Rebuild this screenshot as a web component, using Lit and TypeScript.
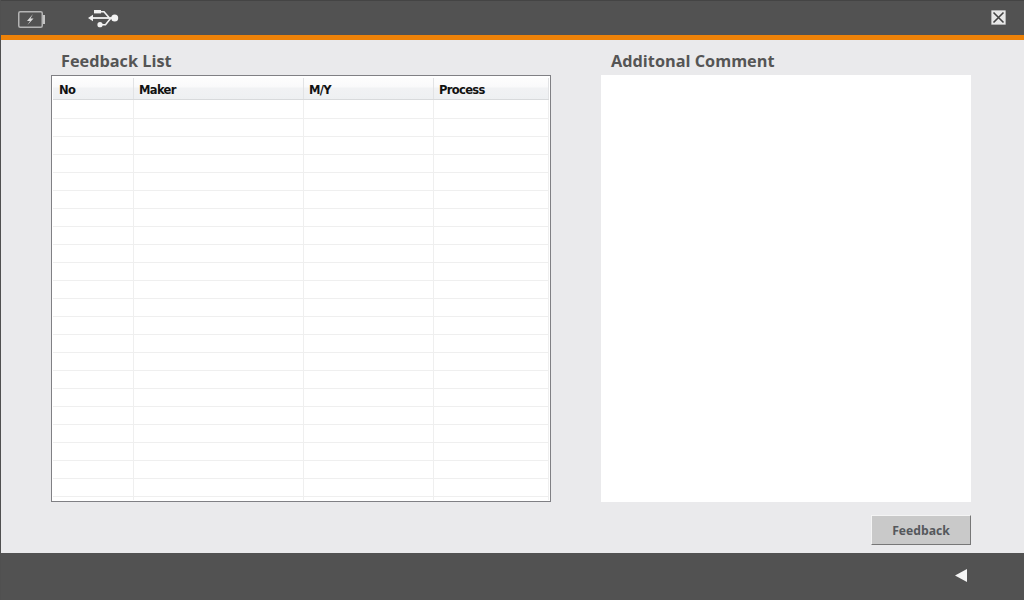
import { LitElement, html, css, svg } from "lit";
import { customElement } from "lit/decorators.js";

const COLS = [
  { name: "No", w: 81 },
  { name: "Maker", w: 170 },
  { name: "M/Y", w: 130 },
  { name: "Process", w: 115 },
];
const ROWS = 22;

@customElement("app-root")
export class AppRoot extends LitElement {
  static styles = css`
    :host { display: block; width: 1024px; height: 600px; overflow: hidden; font-family: "DejaVu Sans", sans-serif; }
    .page { width: 1024px; height: 600px; display: flex; flex-direction: column; background: #eaeaec; box-sizing: border-box; border-left: 1px solid #505050; }
    .top { height: 35px; flex: none; background: #525252; border-top: 1px solid #444; box-sizing: border-box; display: flex; align-items: center; padding: 0 18px 0 17px; }
    .usb { margin-left: 42px; }
    .close { margin-left: auto; margin-top: -2px; width: 15px; height: 15px; background: #e8e8e8; border: 1px solid #b0b0b0; border-radius: 1px; box-sizing: border-box; display: flex; }
    .accent { height: 5px; flex: none; background: #ee8208; }
    .main { flex: 1; display: flex; padding: 10px 53px 0 50px; gap: 50px; }
    .left { width: 500px; flex: none; }
    .right { flex: 1; display: flex; flex-direction: column; }
    h2 { margin: 0; height: 25px; padding-left: 10px; font: bold 16.3px/23px "Open Sans", sans-serif; color: #555; }
    .grid { width: 500px; height: 427px; box-sizing: border-box; background: #fff; border: 1px solid #808084; padding: 2px 2px 0 1px; overflow: hidden; }
    .head, .row { display: flex; width: 496px; box-sizing: border-box; }
    .head { height: 22px; background: linear-gradient(#fdfdfd 0, #fafafb 40%, #f1f2f4 50%, #eef0f2 100%); border-bottom: 1px solid #d8dadc; }
    .hc { box-sizing: border-box; border-right: 1px solid #e2e3e5; font: bold 11.5px/24px "DejaVu Sans", sans-serif; color: #111; padding-left: 5px; letter-spacing: -0.65px; }
    .hc:first-child { padding-left: 6px; }
    .row { height: 18px; border-bottom: 1px solid #efefef; }
    .head + .row { height: 19px; }
    .tail { display: flex; width: 496px; height: 3px; }
    .c { box-sizing: border-box; border-right: 1px solid #efefef; }
    .comment { height: 427px; background: #fff; }
    .actions { display: flex; justify-content: flex-end; padding-top: 13px; }
    button { width: 100px; height: 30px; box-sizing: border-box; background: #c9c9c9; border: 1px solid; border-color: #f4f4f4 #777 #777 #f4f4f4; color: #55585c; font: bold 12.2px "Open Sans", sans-serif; padding: 0; }
    .bottom { height: 47px; flex: none; background: #525252; display: flex; justify-content: flex-end; align-items: center; padding: 0 57px 0 0; }
    .back { margin-top: -3px; }
  `;

  private cells() {
    return COLS.map((c) => html`<div class="c" style="width:${c.w}px"></div>`);
  }

  render() {
    return html`<div class="page">
      <div class="top">
        <svg width="28" height="20" viewBox="0 0 28 20" fill="none">
          <rect x="0.75" y="3.75" width="23.5" height="15.5" rx="1.5" stroke="#b4b4b4" stroke-width="1.5"/>
          <rect x="25" y="7" width="2" height="9" fill="#c4c4c4"/>
          <path d="M15 6 9 13h3L9.5 17l6-6.5h-3z" fill="#dcdcdc"/>
        </svg>
        <svg class="usb" width="32" height="20" viewBox="0 0 32 20" fill="#f2f2f2">
          ${svg`<path d="M0 10 5 6.8V13.2z"/>
          <path d="M4 10H27" stroke="#f2f2f2" stroke-width="1.8" fill="none"/>
          <rect x="6" y="2" width="7" height="3.4"/>
          <path d="M12 3.7H16L21 9.5M12 16.7H17.5L22.5 10.5" stroke="#f2f2f2" stroke-width="1.6" fill="none"/>
          <circle cx="26.7" cy="10" r="3.5"/>
          <circle cx="12" cy="16.7" r="2.6"/>`}
        </svg>
        <div class="close">
          <svg width="13" height="13" viewBox="0 0 13 13"><path d="M1.5 1.5 11.5 11.5M11.5 1.5 1.5 11.5" stroke="#444" stroke-width="1.6"/></svg>
        </div>
      </div>
      <div class="accent"></div>
      <div class="main">
        <div class="left">
          <h2>Feedback List</h2>
          <div class="grid">
            <div class="head">
              ${COLS.map((c) => html`<div class="hc" style="width:${c.w}px">${c.name}</div>`)}
            </div>
            ${Array.from({ length: ROWS }, () => html`<div class="row">${this.cells()}</div>`)}
            <div class="tail">${this.cells()}</div>
          </div>
        </div>
        <div class="right">
          <h2>Additonal Comment</h2>
          <div class="comment"></div>
          <div class="actions"><button>Feedback</button></div>
        </div>
      </div>
      <div class="bottom">
        <svg class="back" width="12" height="13" viewBox="0 0 12 13"><path d="M0 6.5 12 0V13z" fill="#f4f4f4"/></svg>
      </div>
    </div>`;
  }
}
